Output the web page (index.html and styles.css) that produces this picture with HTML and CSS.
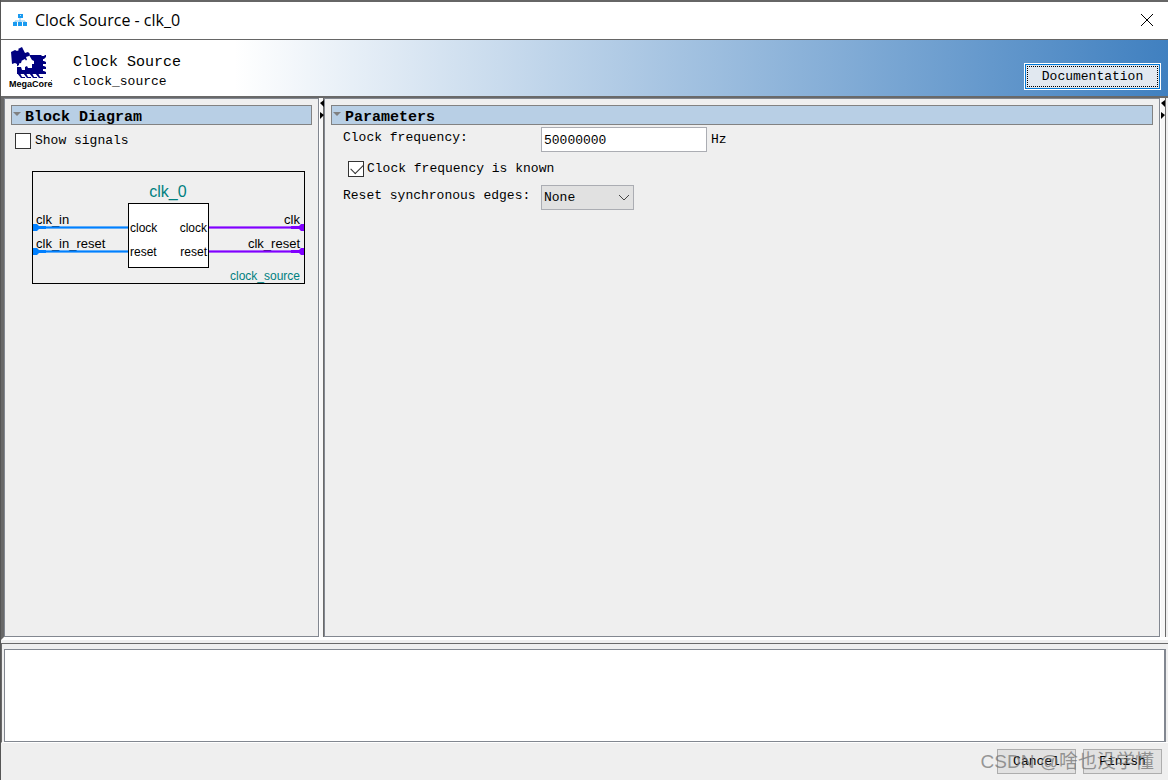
FILE: index.html
```html
<!DOCTYPE html>
<html lang="en">
  <head>
    <meta charset="UTF-8" />
    <meta name="viewport" content="width=device-width, initial-scale=1.0" />
    <title>Clock Source - clk_0</title>
    <link rel="stylesheet" href="styles.css">
  </head>
  <body>
    <div class="titlebar">
      <svg class="app-icon" width="14" height="14" viewBox="0 0 14 14">
        <path d="M7 5v3M2 10V8h10v2M7 8v2" fill="none" stroke="#7cc4f2" />
        <path d="M5 1h5v4H5zM0 9h4v4H0zM5 9h4v4H5zM10 9h4v4h-4z" fill="#1a9af0" />
        <path d="M7 2h1v1H7z" fill="#bfe4ff" />
      </svg>
      <span class="title">Clock Source - clk_0</span>
      <button class="close" type="button" aria-label="Close">
        <svg width="12" height="12" viewBox="0 0 12 12">
          <path d="M0 0l12 12M12 0L0 12" stroke="#000" />
        </svg>
      </button>
    </div>

    <header class="banner">
      <svg class="logo" width="45" height="44" viewBox="0 0 45 44">
        <g fill="#000080">
          <path d="M8 15h11l1-6h12l2 2v17H8z" />
          <path d="M8 27h3l2 4h3v1h-4zM14 27h3l2 4h3v1h-4zM20 27h3l2 4h3v1h-4zM26 27h3l2 4h3v1h-4z" />
          <path d="M33 10h2l1-1h1v2l-2 2h-2zM33 15h2l2 1v2h-4zM33 20h2l2 1v2h-4zM33 25h2l2 1v2h-4z" />
        </g>
        <path d="M7 21l3-2v-3l10-7 3 5 2 1v3h-2v4h-4l-1-2-2 1v3h-3l-1-3H7z" fill="#fff" />
        <path d="M2 6l4-2 2 1 2-1-1-1 4-2 3 6 3-1 2 2-1 2-3 1 1 3-3 1-2-1-1 3-4 1-2-1-3 1z" fill="#000080" />
        <path d="M14 14l2-1 1 2h-3z" fill="#fff" />
        <text x="0" y="41" class="logo-text">MegaCore</text>
        <path d="M42 34h1v1h-1z" fill="#555" />
      </svg>
      <div class="heading">
        <h1>Clock Source</h1>
        <p>clock_source</p>
      </div>
      <button class="doc-button" type="button">Documentation</button>
    </header>

    <main class="workspace">
      <section class="panel diagram-panel">
        <h2>Block Diagram</h2>
        <label class="check"><input type="checkbox" />Show signals</label>
        <svg class="diagram" width="274" height="114" viewBox="0 0 274 114">
          <rect x="0.5" y="0.5" width="272" height="112" fill="none" stroke="#000" />
          <g class="port-name">
            <text x="4" y="53">clk_in</text>
            <text x="4" y="77">clk_in_reset</text>
            <text x="268" y="53" text-anchor="end">clk</text>
            <text x="268" y="77" text-anchor="end">clk_reset</text>
          </g>
          <g fill="#0080ff">
            <path d="M1 53h4l2 2h7v3H7l-2 2H1zM1 77h4l2 2h7v3H7l-2 2H1z" />
            <path d="M14 56h82v1H14zM14 80h82v1H14z" />
            <path d="M14 55h82v3H14zM14 79h82v3H14z" opacity="0.6" />
          </g>
          <g fill="#8000ff">
            <path d="M272 53h-3l-2 2h-8v3h8l2 2h3zM272 77h-3l-2 2h-8v3h8l2 2h3z" />
            <path d="M177 56h82v1h-82zM177 80h82v1h-82z" />
            <path d="M177 55h82v3h-82zM177 79h82v3h-82z" opacity="0.6" />
          </g>
          <rect x="96.5" y="32.5" width="80" height="64" fill="#fff" stroke="#000" />
          <g class="pin-name">
            <text x="98" y="61">clock</text>
            <text x="98" y="85">reset</text>
            <text x="175" y="61" text-anchor="end">clock</text>
            <text x="175" y="85" text-anchor="end">reset</text>
          </g>
          <text x="136" y="26" text-anchor="middle" class="block-name">clk_0</text>
          <text x="268" y="109" text-anchor="end" class="block-type">clock_source</text>
        </svg>
      </section>

      <div class="splitter">
        <svg width="4" height="20" viewBox="0 0 4 20">
          <path d="M4 0v7L0 3zM0 12v7l4-4z" />
        </svg>
      </div>

      <section class="panel param-panel">
        <h2>Parameters</h2>
        <form class="params">
          <label for="freq">Clock frequency:</label>
          <div class="field">
            <input type="text" id="freq" value="50000000" />
            <span>Hz</span>
          </div>
          <label class="check wide"><input type="checkbox" checked />Clock frequency is known</label>
          <label for="edges">Reset synchronous edges:</label>
          <div class="field">
            <select id="edges">
              <option>None</option>
              <option>Both</option>
              <option>Deassert</option>
            </select>
            <svg class="chevron" width="12" height="7" viewBox="0 0 12 7">
              <path d="M1 1l5 5 5-5" fill="none" stroke="#444" />
            </svg>
          </div>
        </form>
      </section>

      <div class="splitter edge">
        <svg width="4" height="20" viewBox="0 0 4 20">
          <path d="M4 0v7L0 3zM0 12v7l4-4z" />
        </svg>
      </div>
    </main>

    <div class="messages-wrap">
      <div class="messages"></div>
    </div>

    <footer class="actions">
      <button type="button">Cancel</button>
      <button type="button">Finish</button>
      <span class="watermark">CSDN @啥也没学懂</span>
    </footer>
  </body>
</html>
```
FILE: styles.css
```css
* {
  box-sizing: border-box;
}
body {
  margin: 0;
  min-height: 100vh;
  display: flex;
  flex-direction: column;
  border-left: 1px solid #555;
  background-color: #efefef;
  color: #000;
  font: 13px/18px "Liberation Mono", monospace;
}
h1,
h2,
p {
  margin: 0;
}
button,
input,
select {
  font: inherit;
  color: inherit;
}

.titlebar {
  display: flex;
  align-items: center;
  height: 40px;
  padding: 0 15px 2px 12px;
  border-top: 2px solid #666;
  border-bottom: 1px solid #666;
  background-color: #fff;
}
.title {
  flex: 1;
  margin-left: 8px;
  font: 16px/20px "Open Sans", sans-serif;
}
.close {
  display: flex;
  padding: 0;
  border: none;
  background: none;
}

.banner {
  display: flex;
  height: 58px;
  padding: 6px 7px 0 8px;
  border-bottom: 2px solid #696969;
  background: linear-gradient(to right, #fff 20%, #4080c0);
}
.logo-text {
  font: bold 9px "Liberation Sans", sans-serif;
}
.heading {
  flex: 1;
  padding: 7px 0 0 19px;
}
.heading h1 {
  font-size: 15px;
  font-weight: normal;
  line-height: 20px;
}
.doc-button {
  width: 137px;
  height: 27px;
  margin-top: 17px;
  padding: 0;
  border: 1px solid #fff;
  outline: 1px dotted #000;
  outline-offset: -4px;
  box-shadow: inset 0 0 0 1px #0078d7;
  background-color: #e1e8f0;
}

.workspace {
  flex: 1;
  display: flex;
  border-left: 3px solid #696969;
  border-bottom: 3px solid #fff;
}
.panel {
  padding: 6px;
  border: 1px solid #828790;
}
.diagram-panel {
  width: 315px;
}
.param-panel {
  flex: 1;
}
.panel h2 {
  display: flex;
  height: 20px;
  border: 1px solid #828282;
  background-color: #b8cfe5;
  font-size: 15px;
  line-height: 24px;
}
.panel h2::before {
  content: "";
  height: 0;
  margin: 6px 4px 0 1px;
  border: 4px solid transparent;
  border-top-color: #808080;
  border-bottom: none;
}

.check {
  display: flex;
  align-items: center;
  height: 16px;
}
.check input {
  appearance: none;
  width: 16px;
  height: 16px;
  margin: 0 4px 0 0;
  border: 1px solid #333;
  background-color: #fff;
}
.check input:checked::before {
  content: "";
  display: block;
  width: 11px;
  height: 6px;
  margin: 2px 2px;
  border: solid #333;
  border-width: 0 0 1px 1px;
  transform: rotate(-45deg);
}
.diagram-panel .check {
  margin: 8px 0 0 4px;
}
.diagram {
  display: block;
  margin: 22px 0 0 21px;
  font-family: "Liberation Sans", sans-serif;
  font-size: 12px;
}
.port-name {
  font-size: 13px;
}
.block-name {
  font-size: 16px;
  fill: #008080;
}
.block-type {
  fill: #008080;
}

.splitter {
  width: 5px;
  border-left: 1px solid #fff;
  border-right: 1px solid #696969;
  background-color: #f7f7f7;
}
.splitter svg {
  display: block;
  margin-top: 2px;
}
.edge {
  width: 6px;
  margin-right: 2px;
}

.params {
  display: grid;
  grid-template-columns: 198px auto;
  row-gap: 8px;
  padding: 2px 0 0 12px;
  line-height: 22px;
}
.params .wide {
  grid-column: 1 / -1;
  height: 17px;
  margin-left: 5px;
}
.params .wide input {
  margin-right: 3px;
}
.field {
  display: flex;
  align-items: center;
  height: 25px;
}
.field input,
.field select {
  height: 25px;
  padding: 1px 2px 0;
  border: 1px solid #abadb3;
  border-radius: 0;
}
.field input {
  width: 166px;
  margin-right: 4px;
}
.field select {
  appearance: none;
  width: 93px;
  background-color: #e1e1e1;
}
.chevron {
  margin-left: -16px;
  pointer-events: none;
}

.messages-wrap {
  margin-top: 3px;
  padding: 5px 2px 0 2px;
  border-top: 1px solid #696969;
  border-left: 1px solid #696969;
  border-bottom: 1px solid #fff;
}
.messages {
  height: 93px;
  border: 1px solid #828790;
  border-right-width: 2px;
  background-color: #fff;
}

.actions {
  position: relative;
  display: flex;
  justify-content: flex-end;
  gap: 7px;
  height: 37px;
  padding: 6px 6px 0;
}
.actions button {
  width: 79px;
  height: 25px;
  padding: 0;
  border: 1px solid #adadad;
  background-color: #e1e1e1;
}
.watermark {
  position: absolute;
  right: 14px;
  top: 7px;
  color: rgba(110, 110, 110, 0.7);
  font: 19px/24px "Liberation Sans", "Noto Sans CJK SC", sans-serif;
  white-space: nowrap;
  pointer-events: none;
}
```
